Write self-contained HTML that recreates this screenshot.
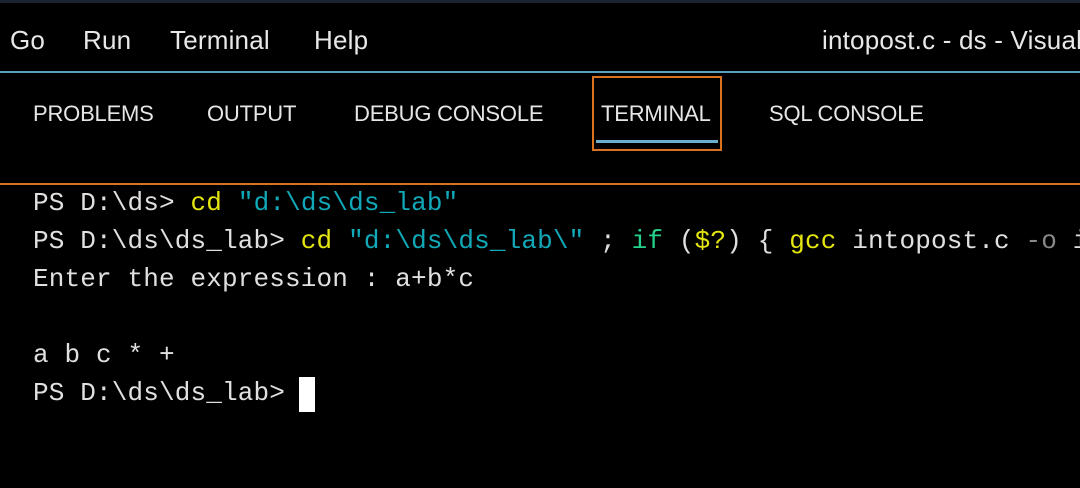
<!DOCTYPE html>
<html><head><style>
body{margin:0;width:1080px;height:488px;background:#000;overflow:hidden;position:relative;font-family:"Liberation Sans",sans-serif;color:#e8e8e8}
.a{position:absolute;white-space:pre}
.m{font-size:26px;top:25px;letter-spacing:0.2px}
.t{font-size:22px;top:101px;letter-spacing:-0.2px;color:#e6e6e6}
.mono{font-family:"Liberation Mono",monospace;font-size:26px;left:33px;color:#e0e0e0;letter-spacing:0.15px}
.y{color:#e5e510}.c{color:#11a8b8}.g{color:#23d18b}.d{color:#888}
</style></head><body>
<div class="a" style="left:0;top:0;width:1080px;height:3px;background:#1a2430"></div>
<div class="a m" style="left:10px">Go</div>
<div class="a m" style="left:83px">Run</div>
<div class="a m" style="left:170px">Terminal</div>
<div class="a m" style="left:314px">Help</div>
<div class="a m" style="left:822px">intopost.c - ds - Visual</div>
<div class="a" style="left:0;top:71px;width:1080px;height:2px;background:#5aa0bb"></div>
<div class="a t" style="left:33px">PROBLEMS</div>
<div class="a t" style="left:207px">OUTPUT</div>
<div class="a t" style="left:354px">DEBUG CONSOLE</div>
<div class="a t" style="left:601px">TERMINAL</div>
<div class="a t" style="left:769px">SQL CONSOLE</div>
<div class="a" style="left:592px;top:76px;width:126px;height:71px;border:2px solid #d9731f"></div>
<div class="a" style="left:596px;top:140px;width:122px;height:3px;background:#6ab0cc"></div>
<div class="a" style="left:0;top:183px;width:1080px;height:2px;background:#d9731f"></div>
<div class="a mono" style="top:188px">PS D:\ds&gt; <span class="y">cd</span> <span class="c">"d:\ds\ds_lab"</span></div>
<div class="a mono" style="top:226px">PS D:\ds\ds_lab&gt; <span class="y">cd</span> <span class="c">"d:\ds\ds_lab\"</span> ; <span class="g">if</span> (<span class="y">$?</span>) { <span class="y">gcc</span> intopost.c <span class="d">-o</span> i</div>
<div class="a mono" style="top:264px">Enter the expression : a+b*c</div>
<div class="a mono" style="top:340px">a b c * +</div>
<div class="a mono" style="top:378px">PS D:\ds\ds_lab&gt; </div>
<div class="a" style="left:299px;top:377px;width:16px;height:35px;background:#fff"></div>
</body></html>
